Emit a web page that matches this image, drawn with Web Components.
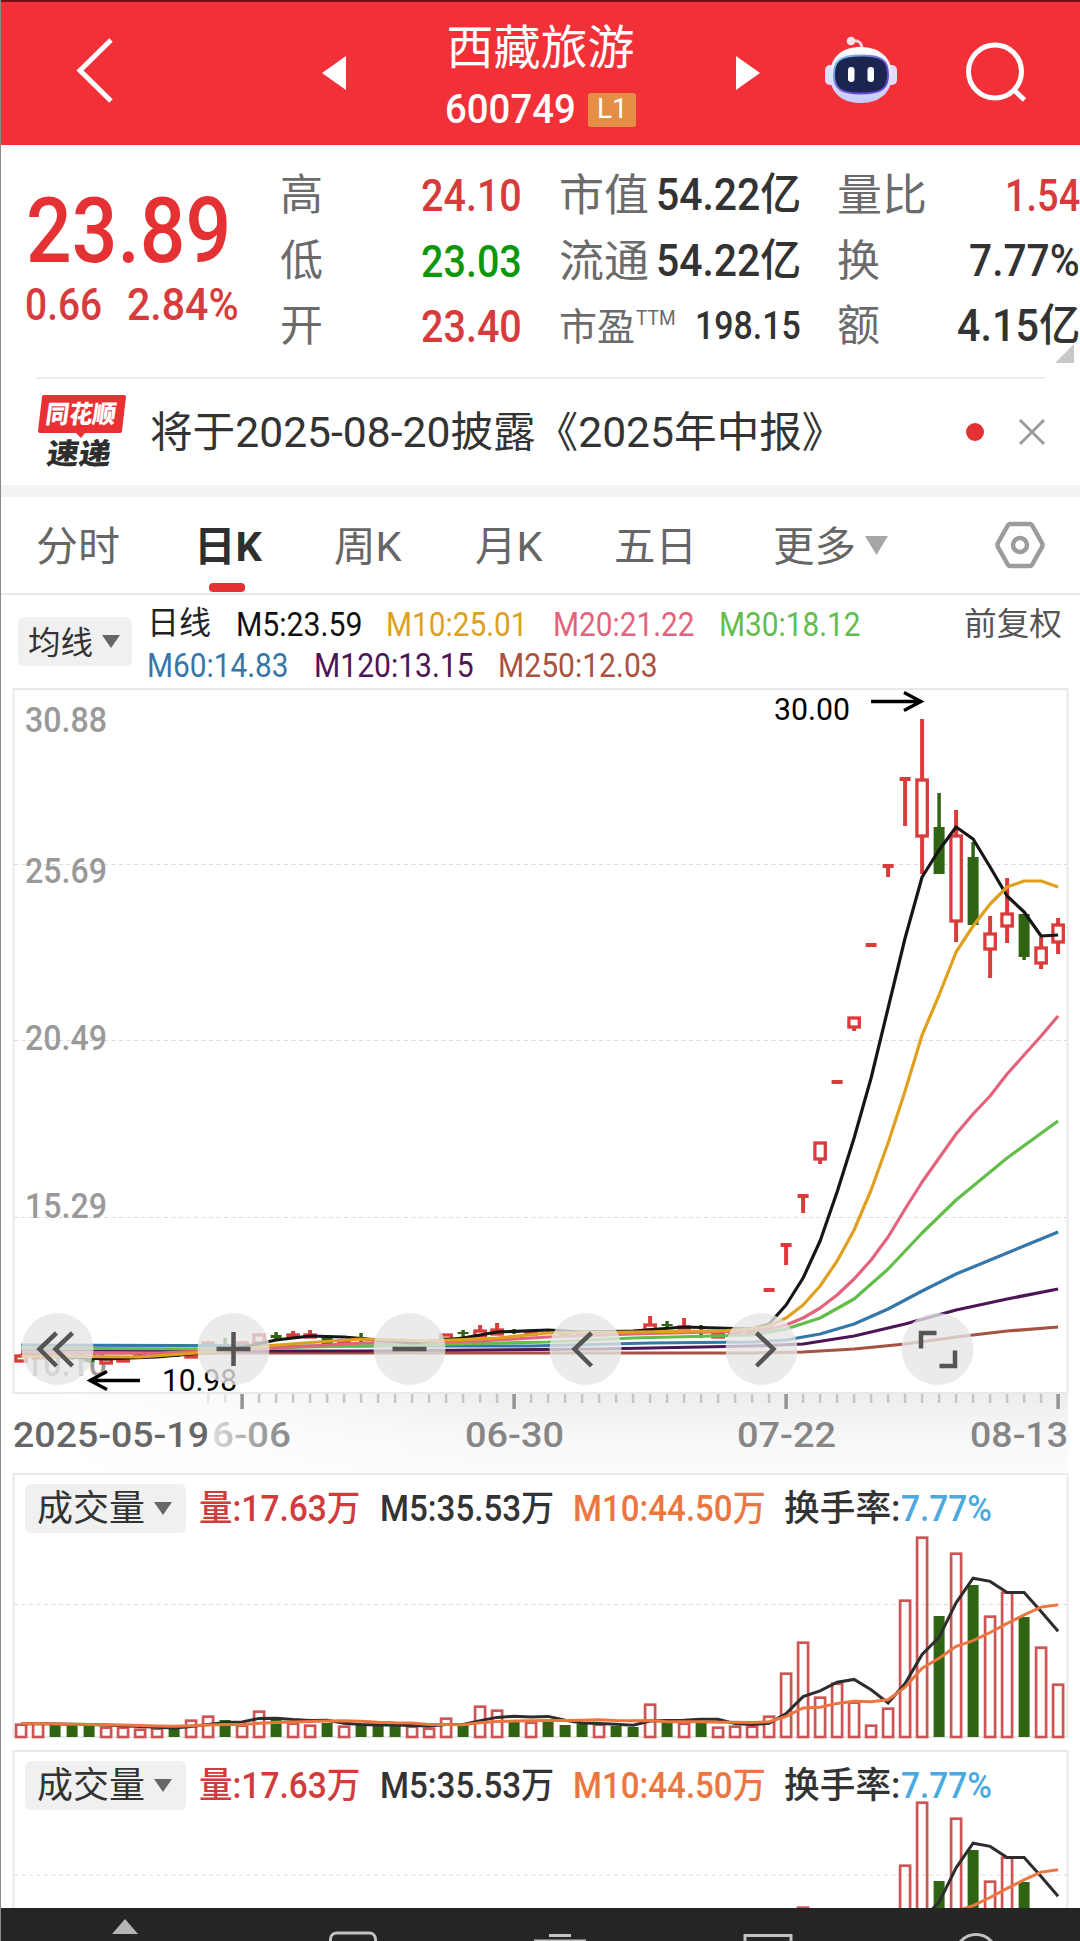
<!DOCTYPE html>
<html lang="zh-CN">
<head>
<meta charset="utf-8">
<title>西藏旅游 600749</title>
<style>
  body {
    margin: 0;
    background: #fff;
    color: #333;
    font-family: Roboto, "Noto Sans CJK SC", sans-serif;
    line-height: 1;
  }
</style>
</head>
<body>
<stock-app></stock-app>
<script>
const RED = '#da3c3c';
const GREEN = '#2f6413';
const STEP = 17;
const FIRST_X = 20.6;
const xAt = i => FIRST_X + i * STEP;

// one line of text condensed or stretched to the width in "w"
class FitText extends HTMLElement {
  constructor() {
    super();
    this.attachShadow({ mode: 'open' });
    this.shadowRoot.innerHTML = `
      <style>
        :host { display: inline-block; flex: none; white-space: nowrap; line-height: 1; }
        span { display: inline-block; transform-origin: 0 50%; }
      </style>
      <span><slot></slot></span>
    `;
  }

  connectedCallback() {
    const w = Number(this.getAttribute('w'));
    if (this.hasAttribute('size')) this.style.fontSize = this.getAttribute('size') + 'px';
    const span = this.shadowRoot.querySelector('span');
    const natural = span.offsetWidth;
    this.style.width = w + 'px';
    span.style.transform = `scaleX(${w / natural})`;
  }
}

class StockHeader extends HTMLElement {
  constructor() {
    super();
    this.attachShadow({ mode: 'open' });
    this.shadowRoot.innerHTML = `
      <style>
        :host {
          display: grid;
          grid-template-columns: 322px 438px 65px 72px 1fr;
          height: 145px;
          box-sizing: border-box;
          border-top: 2px solid #7a0d12;
          background: #f23038;
          color: #fff;
        }
        svg { display: block; }
        .back { padding: 35px 0 0 73px; }
        .switch { display: flex; justify-content: space-between; }
        .switch svg { margin-top: 54px; }
        .name { display: flex; flex-direction: column; align-items: center; padding-top: 22px; margin-right: 1px; }
        .code { display: flex; align-items: center; gap: 12px; margin-top: 18px; font-weight: 500; }
        .level {
          display: flex;
          justify-content: center;
          align-items: center;
          width: 48px;
          height: 34px;
          border-radius: 3px;
          background: #e58e46;
          font-weight: 400;
        }
        .bot { grid-column: 4; padding-top: 34px; }
        .search { padding: 40px 0 0 67px; }
      </style>
      <div class="back">
        <svg width="44" height="70" viewBox="0 0 44 70" fill="none" stroke="#fff" stroke-width="5"><path d="M38 3 7 33.5 38 64"/></svg>
      </div>
      <div class="switch">
        <svg width="24" height="34" viewBox="0 0 24 34" fill="#fff"><path d="M24 0v34L0 17z"/></svg>
        <div class="name">
          <fit-text w="188" size="47">西藏旅游</fit-text>
          <div class="code"><fit-text w="131" size="41">600749</fit-text><span class="level"><fit-text w="31" size="27">L1</fit-text></span></div>
        </div>
        <svg width="24" height="34" viewBox="0 0 24 34" fill="#fff"><path d="M0 0v34l24-17z"/></svg>
      </div>
      <div class="bot">
        <svg width="72" height="70" viewBox="0 0 72 70">
          <defs>
            <linearGradient id="shell" x1="0" y1="0" x2="0" y2="1"><stop offset="0" stop-color="#fff"/><stop offset="1" stop-color="#c6c8fb"/></linearGradient>
            <linearGradient id="rim" x1="0" y1="0" x2="1" y2="1"><stop offset="0" stop-color="#7fd7ef"/><stop offset=".6" stop-color="#6a48d8"/><stop offset="1" stop-color="#5b49e0"/></linearGradient>
          </defs>
          <path d="M27 5q10-2 10 9" fill="none" stroke="#fbd3df" stroke-width="3"/>
          <circle cx="26" cy="5" r="4.3" fill="#ffe0e6"/>
          <rect x="0" y="29" width="12" height="20" rx="5" fill="#e3dcfb"/>
          <rect x="60" y="29" width="12" height="20" rx="5" fill="#e3dcfb"/>
          <path d="M36 11c19 0 31 11 31 28S55 67 36 67 5 57 5 39s12-28 31-28z" fill="url(#shell)"/>
          <path d="M36 19.500c21 0 27 5 27 19s-6 19-27 19-27-5-27-19 6-19 27-19z" fill="#1b2550" stroke="url(#rim)" stroke-width="2"/>
          <rect x="23" y="31" width="6.5" height="15" rx="3.2" fill="#fff"/>
          <rect x="42.500" y="31" width="6.500" height="15" rx="3.200" fill="#fff"/>
        </svg>
      </div>
      <div class="search">
        <svg width="64" height="64" viewBox="0 0 64 64" fill="none" stroke="#fff" stroke-width="5"><circle cx="31" cy="29.500" r="26.500"/><path d="m49 47 11.500 11"/></svg>
      </div>
    `;
  }
}

class QuotePanel extends HTMLElement {
  constructor() {
    super();
    this.attachShadow({ mode: 'open' });
    this.shadowRoot.innerHTML = `
      <style>
        :host { display: grid; grid-template-columns: 252px 242px 250px 1fr; column-gap: 28px; height: 232px; position: relative; }
        .price { padding: 41px 0 0 26px; color: #e43133; font-weight: 500; }
        .change { display: flex; gap: 25px; margin-top: 6px; margin-left: -1px; color: #d63c3c; }
        .col { display: grid; grid-template-rows: repeat(3, 66px); padding-top: 17px; font-weight: 500; }
        .row { display: flex; justify-content: space-between; align-items: center; }
        .label { color: #6b6b6b; font-weight: 400; margin-top: 1px; }
        .ttm { align-self: flex-start; margin: 14px auto 0 1px; }
        .up { color: #d63c3c; }
        .down { color: #0c970c; }
        .row:last-child > * { margin-bottom: 2px; }
        .corner { position: absolute; right: 6px; bottom: 14px; }
      </style>
      <div class="price">
        <fit-text w="205" size="91">23.89</fit-text>
        <div class="change"><fit-text w="77" size="44">0.66</fit-text><fit-text w="112" size="44">2.84%</fit-text></div>
      </div>
      <div class="col">
        <div class="row"><fit-text class="label" w="43" size="43">高</fit-text><fit-text class="up" w="101" size="45">24.10</fit-text></div>
        <div class="row"><fit-text class="label" w="43" size="43">低</fit-text><fit-text class="down" w="101" size="45">23.03</fit-text></div>
        <div class="row"><fit-text class="label" w="43" size="43">开</fit-text><fit-text class="up" w="101" size="45">23.40</fit-text></div>
      </div>
      <div class="col" style="margin-left: 9px; margin-right: -1px">
        <div class="row"><fit-text class="label" w="90" size="44">市值</fit-text><fit-text w="145" size="44">54.22亿</fit-text></div>
        <div class="row"><fit-text class="label" w="90" size="44">流通</fit-text><fit-text w="145" size="44">54.22亿</fit-text></div>
        <div class="row"><fit-text class="label" w="76" size="38">市盈</fit-text><fit-text class="label ttm" w="40" size="21">TTM</fit-text><fit-text w="106" size="39">198.15</fit-text></div>
      </div>
      <div class="col" style="margin-left: 9px">
        <div class="row"><fit-text class="label" w="90" size="44">量比</fit-text><fit-text class="up" w="75" size="45">1.54</fit-text></div>
        <div class="row"><fit-text class="label" w="43" size="43">换</fit-text><fit-text w="111" size="44">7.77%</fit-text></div>
        <div class="row"><fit-text class="label" w="43" size="43">额</fit-text><fit-text w="123" size="44">4.15亿</fit-text></div>
      </div>
      <svg class="corner" width="19" height="19"><path d="M19 0v19H0z" fill="#c8c8c8"/></svg>
    `;
  }
}

class NoticeBar extends HTMLElement {
  constructor() {
    super();
    this.attachShadow({ mode: 'open' });
    this.shadowRoot.innerHTML = `
      <style>
        :host { display: block; height: 120px; box-sizing: border-box; border-bottom: 12px solid #f3f3f3; padding: 0 35px 0 36px; }
        .line { display: flex; align-items: center; height: 106px; border-top: 2px solid #ececec; }
        .logo { display: grid; width: 91px; height: 76px; font-weight: 900; }
        .logo > * { grid-area: 1 / 1; }
        .logo fit-text { transform: skewX(-8deg); align-self: start; }
        .brand { margin: 8px 0 0 10px; color: #fff; }
        .kind { margin: 46px 0 0 11px; color: #2e2e2e; }
        .text { margin: 2px 0 0 23px; }
        .dot { width: 18px; height: 18px; border-radius: 50%; background: #e43133; margin: 0 35px 0 auto; }
      </style>
      <div class="line">
        <div class="logo">
          <svg width="91" height="76" viewBox="36 393 91 76">
            <path d="M44 394h80q2 0 2 2l-4 34q0 2-3 2H85l-4 5-5-5H40q-2 0-2-2l4-34q0-2 2-2z" fill="#e93134"/>
          </svg>
          <fit-text class="brand" w="70" size="25">同花顺</fit-text>
          <fit-text class="kind" w="64" size="29">速递</fit-text>
        </div>
        <fit-text class="text" w="694" size="42">将于2025-08-20披露《2025年中报》</fit-text>
        <i class="dot"></i>
        <svg width="26" height="26" viewBox="0 0 26 26" stroke="#999" stroke-width="2.800"><path d="m1 1 24 24M25 1 1 25"/></svg>
      </div>
    `;
  }
}

class PeriodTabs extends HTMLElement {
  constructor() {
    super();
    this.attachShadow({ mode: 'open' });
    this.shadowRoot.innerHTML = `
      <style>
        :host { display: flex; height: 98px; box-sizing: border-box; border-bottom: 2px solid #e8e8e8; padding: 0 35px 0 36px; color: #666; }
        div { display: flex; flex-direction: column; align-items: center; justify-content: center; position: relative; padding-top: 4px; }
        .active { color: #2f2f2f; font-weight: 700; }
        .active::after { content: ""; position: absolute; bottom: 1px; left: 15px; width: 36px; height: 9px; border-radius: 4px; background: #e43133; }
        .caret { margin: 38px auto 0 9px; }
        .set { margin-top: 24px; }
      </style>
      <div><fit-text w="84" size="41">分时</fit-text></div>
      <div class="active" style="margin-left: 74px"><fit-text w="68" size="41">日K</fit-text></div>
      <div style="margin-left: 72px"><fit-text w="68" size="41">周K</fit-text></div>
      <div style="margin-left: 73px"><fit-text w="68" size="41">月K</fit-text></div>
      <div style="margin-left: 71px"><fit-text w="83" size="41">五日</fit-text></div>
      <div style="margin-left: 76px"><fit-text w="83" size="41">更多</fit-text></div>
      <svg class="caret" width="23" height="20"><path d="M0 1h23L11.500 20z" fill="#a6a6a6"/></svg>
      <svg class="set" width="50" height="48" viewBox="0 0 50 48" fill="none" stroke="#9c9c9c" stroke-width="4.500"><path d="M15.500 3h19q2 0 3 2L47 22q1 2 0 4l-9.500 17q-1 2-3 2h-19q-2 0-3-2L3 26q-1-2 0-4l9.500-17q1-2 3-2z"/><circle cx="25" cy="24" r="7"/></svg>
    `;
  }
}

// grey dropdown button with a small caret, the text comes through the slot
class PickButton extends HTMLElement {
  constructor() {
    super();
    this.attachShadow({ mode: 'open' });
    this.shadowRoot.innerHTML = `
      <style>
        :host { display: inline-flex; flex: none; align-items: center; gap: 9px; height: 49px; padding: 0 14px 0 12px; box-sizing: border-box; border-radius: 6px; background: #f0f0f0; color: #333; }
        ::slotted(*) { margin-top: 2px; }
      </style>
      <slot></slot>
      <svg width="18" height="13"><path d="M0 0h18L9 13z" fill="#666"/></svg>
    `;
  }
}

class AverageLegend extends HTMLElement {
  constructor() {
    super();
    this.attachShadow({ mode: 'open' });
    this.shadowRoot.innerHTML = `
      <style>
        :host { display: flex; height: 92px; padding: 0 18px; }
        pick-button { margin-top: 22px; padding: 0 12px 0 10px; }
        .lines { margin: 12px auto 0 15px; }
        .lines div { display: flex; height: 41px; gap: 24.500px; align-items: flex-start; }
        .adjust { margin-top: 13px; }
      </style>
      <pick-button><fit-text w="65" size="32">均线</fit-text></pick-button>
      <div class="lines">
        <div>
          <fit-text w="64" size="32" style="color:#222">日线</fit-text>
          <fit-text w="126" size="34" style="color:#111">M5:23.59</fit-text>
          <fit-text w="142" size="34" style="color:#dda023">M10:25.01</fit-text>
          <fit-text w="142" size="34" style="color:#e3637c">M20:21.22</fit-text>
          <fit-text w="142" size="34" style="color:#62bd4b">M30:18.12</fit-text>
        </div>
        <div>
          <fit-text w="142" size="34" style="color:#3577a8">M60:14.83</fit-text>
          <fit-text w="160" size="34" style="color:#4c1656">M120:13.15</fit-text>
          <fit-text w="160" size="34" style="color:#ab523f">M250:12.03</fit-text>
        </div>
      </div>
      <fit-text class="adjust" w="98" size="32" style="color:#555">前复权</fit-text>
    `;
  }
}

class PriceChart extends HTMLElement {
  constructor() {
    super();
    this.attachShadow({ mode: 'open' });
    // index, top of wick, top of body, bottom of body, bottom of wick, green
    this.candles = [
      [0, 1355, 1357, 1362, 1362], [1, 1354, 1356, 1359, 1359], [2, 1352, 1355, 1357, 1359, 1], [3, 1356, 1357, 1359, 1361, 1], [4, 1357, 1360, 1363, 1364, 1],
      [5, 1358, 1360, 1364, 1365], [6, 1358, 1360, 1362, 1362], [7, 1355, 1357, 1358, 1358], [8, 1354, 1355, 1357, 1357], [9, 1354, 1356, 1358, 1358, 1],
      [10, 1354, 1356, 1358, 1358], [11, 1342, 1344, 1350, 1350], [12, 1339, 1345, 1347, 1350, 1], [13, 1342, 1344, 1348, 1348], [14, 1334, 1336, 1344, 1344],
      [15, 1333, 1336, 1339, 1341, 1], [16, 1332, 1336, 1338, 1338], [17, 1331, 1336, 1338, 1339], [18, 1336, 1337, 1345, 1345, 1], [19, 1341, 1342, 1345, 1345],
      [20, 1334, 1338, 1340, 1343, 1], [21, 1340, 1343, 1345, 1345, 1], [22, 1341, 1342, 1345, 1345, 1], [23, 1341, 1344, 1345, 1345], [24, 1341, 1343, 1344, 1344],
      [25, 1335, 1336, 1340, 1340], [26, 1331, 1333, 1335, 1338, 1], [27, 1326, 1332, 1337, 1337], [28, 1324, 1331, 1335, 1335], [29, 1330, 1332, 1334, 1335, 1],
      [30, 1332, 1333, 1335, 1336], [31, 1330, 1333, 1335, 1335, 1], [32, 1331, 1333, 1336, 1337, 1], [33, 1332, 1334, 1336, 1337, 1], [34, 1332, 1333, 1336, 1336],
      [35, 1332, 1333, 1336, 1337, 1], [36, 1332, 1334, 1335, 1336, 1], [37, 1317, 1326, 1331, 1331], [38, 1322, 1325, 1327, 1330, 1], [39, 1319, 1328, 1329, 1329],
      [40, 1326, 1331, 1333, 1339, 1], [41, 1332, 1335, 1338, 1338], [42, 1331, 1333, 1335, 1335], [43, 1331, 1333, 1335, 1335],
      [44, 1291, 1291, 1291, 1291], [45, 1246, 1246, 1246, 1266], [46, 1197, 1197, 1197, 1214], [47, 1144, 1144, 1160, 1165], [48, 1083, 1083, 1083, 1083],
      [49, 1019, 1019, 1028, 1032], [50, 946, 946, 946, 946], [51, 867, 867, 867, 878], [52, 780, 780, 780, 827], [53, 720, 781, 837, 875],
      [54, 794, 828, 875, 875, 1], [55, 811, 837, 922, 943], [56, 843, 858, 926, 926, 1], [57, 917, 935, 950, 979], [58, 879, 915, 927, 944],
      [59, 915, 915, 958, 961, 1], [60, 938, 949, 964, 970], [61, 919, 926, 943, 955]
    ];
    // [index, y] pairs of every moving average
    this.averages = [
      ['#a65244', [[0, 1354], [39, 1354], [43, 1354], [46, 1353], [49, 1350], [52, 1345], [55, 1338], [58, 1332], [61, 1328]]],
      ['#4c1656', [[0, 1352], [20, 1352], [34, 1350], [43, 1347], [46, 1345], [49, 1337], [52, 1325], [55, 1311], [58, 1300], [61, 1290]]],
      ['#3577a8', [[0, 1346], [15, 1347], [30, 1347], [37, 1344], [43, 1343], [45, 1341], [47, 1335], [49, 1325], [51, 1310], [53, 1292], [55, 1275], [58, 1254], [61, 1233]]],
      ['#62bd4b', [[0, 1349], [10, 1350], [20, 1347], [31, 1343], [36, 1339], [43, 1336], [45, 1330], [47, 1319], [49, 1300], [51, 1270], [53, 1234], [55, 1201], [58, 1159], [61, 1122]]],
      ['#e3637c', [[0, 1353], [8, 1354], [14, 1350], [20, 1344], [27, 1342], [31, 1338], [36, 1335], [43, 1332], [44, 1330], [45, 1326], [46, 1319], [47, 1309], [48, 1296], [49, 1280], [50, 1261], [51, 1238], [52, 1210], [53, 1183], [54, 1159], [55, 1135], [56, 1115], [57, 1097], [58, 1075], [59, 1056], [60, 1037], [61, 1017]]],
      ['#161616', [[0, 1356], [5, 1360], [8, 1358], [12, 1352], [15, 1341], [17, 1337], [19, 1338], [21, 1341], [23, 1344], [26, 1339], [28, 1333], [31, 1331], [33, 1333], [36, 1332], [39, 1328], [41, 1329], [43, 1330], [44, 1325], [45, 1306], [46, 1279], [47, 1242], [48, 1193], [49, 1139], [50, 1079], [51, 1009], [52, 939], [53, 878], [54, 851], [55, 828], [56, 840], [57, 868], [58, 897], [59, 913], [60, 937], [61, 936]]],
      ['#e0a01f', [[0, 1357], [7, 1358], [12, 1352], [15, 1346], [20, 1340], [24, 1342], [28, 1339], [31, 1334], [36, 1333], [41, 1332], [43, 1330], [44, 1327], [45, 1319], [46, 1306], [47, 1287], [48, 1262], [49, 1231], [50, 1191], [51, 1144], [52, 1092], [53, 1036], [54, 996], [55, 953], [56, 927], [57, 905], [58, 888], [59, 882], [60, 882], [61, 888]]]
    ];
  }

  connectedCallback() {
    this.render();
  }

  candle([i, high, top, bottom, low, green]) {
    const x = xAt(i) + .5;
    if (green) {
      return `<path d="M${x} ${high}V${low}" stroke="${GREEN}" stroke-width="3.5"/><rect x="${x - 5.5}" y="${top}" width="11" height="${bottom - top}" fill="${GREEN}"/>`;
    }
    if (top === bottom) {
      return `<path d="M${x - 5.5} ${top}h11M${x} ${top}V${low}" stroke="${RED}" stroke-width="4"/>`;
    }
    return `<path d="M${x} ${high}V${top}M${x} ${bottom}V${low}" stroke="${RED}" stroke-width="4"/><rect x="${x - 5.2}" y="${top}" width="10.4" height="${bottom - top}" fill="#fff" stroke="${RED}" stroke-width="3.3"/>`;
  }

  ticks() {
    let out = '';
    for (let i = 11; i < 62; i++) {
      const major = (i - 13) % 16 === 0;
      const color = i < 13 ? '#e4e4e4' : major ? '#929292' : '#c6c6c6';
      out += `<path d="M${xAt(i) + .5} 1395v${major ? 15 : 9}" stroke="${color}" stroke-width="${major ? 3.5 : 2.5}"/>`;
    }
    return out;
  }

  label(text, x, y, w, size, fill) {
    return `<text x="${x}" y="${y}" font-size="${size}" textLength="${w}" lengthAdjust="spacingAndGlyphs" fill="${fill}">${text}</text>`;
  }

  render() {
    const icons = [
      'M-1-16-18 0-1 17M15-16-2 0 15 17',
      'M-17 0H17M0-17V17',
      'M-17 0H17',
      'M6-16-11 0 6 17',
      'M-5-16 12 0-5 17',
      'M-1-16h-15.500v15.500M17.500 1.500v15.500H2'
    ];
    this.shadowRoot.innerHTML = `
      <style>
        :host { display: block; height: 785px; }
        svg { display: block; }
      </style>
      <svg width="1080" height="785" viewBox="0 688 1080 785" fill="none" font-family="Roboto">
        <defs>
          <linearGradient id="axis" x1="0" y1="0" x2="0" y2="1"><stop offset="0" stop-color="#ededed"/><stop offset=".6" stop-color="#f8f8f8"/><stop offset="1" stop-color="#fbfbfb"/></linearGradient>
          <linearGradient id="fade"><stop offset="0" stop-color="#fff"/><stop offset=".4" stop-color="#fff" stop-opacity=".75"/><stop offset="1" stop-color="#fff" stop-opacity="0"/></linearGradient>
          <linearGradient id="date"><stop offset="0" stop-color="#ddd"/><stop offset=".45" stop-color="#aaa"/><stop offset="1" stop-color="#888"/></linearGradient>
        </defs>
        <path d="M13 1393h1055v80H13z" fill="url(#axis)"/>
        <path d="M13 1395h487v78H13z" fill="url(#fade)"/>
        <path d="M13.500 690h1054v704h-1054z" stroke="#e9e9e9" stroke-width="2"/>
        <path d="M14 865.500h1053M14 1041.500h1053M14 1218.500h1053" stroke="#dadada" stroke-dasharray="4 3.500"/>
        ${this.ticks()}
        <g font-weight="500">
          ${this.label('30.88', 25, 733, 82, 35, '#999')}
          ${this.label('25.69', 25, 884, 82, 35, '#999')}
          ${this.label('20.49', 25, 1051, 82, 35, '#999')}
          ${this.label('15.29', 25, 1219, 82, 35, '#999')}
          ${this.label('10.10', 25, 1377, 82, 35, '#999')}
          ${this.label('2025-05-19', 13, 1448, 196, 35, '#666')}
          ${this.label('6-06', 212, 1448, 79, 35, 'url(#date)')}
          ${this.label('06-30', 465, 1448, 99, 35, '#868686')}
          ${this.label('07-22', 737, 1448, 99, 35, '#868686')}
          ${this.label('08-13', 970, 1448, 98, 35, '#868686')}
        </g>
        ${this.candles.map(c => this.candle(c)).join('')}
        <g stroke-width="3.200" stroke-linejoin="round">
          ${this.averages.map(([color, pts]) => `<polyline points="${pts.map(([i, y]) => `${xAt(i) + .5},${y}`).join(' ')}" stroke="${color}"/>`).join('')}
        </g>
        ${this.label('30.00', 774, 721, 76, 31, '#000')}
        ${this.label('10.98', 162, 1392, 75, 31, '#000')}
        <path d="M871 702.500h50M904 693.500l17 9-17 9M140 1381.500H90M107 1372.500l-17 9 17 9" stroke="#000" stroke-width="3.300"/>
        ${icons.map((d, n) => `
          <g transform="translate(${57.5 + n * 176} 1350)">
            <circle r="36" fill="#e6e6e6" fill-opacity=".78"/>
            <path d="${d}" stroke="#555" stroke-width="4.500"/>
          </g>
        `).join('')}
      </svg>
    `;
  }
}

class VolumeChart extends HTMLElement {
  constructor() {
    super();
    this.attachShadow({ mode: 'open' });
    this.bars = [
      13, 14, 12, 12, 12, 10, 10, 8, 9, 8, 17, 21, 17, 12, 26, 18, 14, 12, 14, 11, 12,
      11, 12, 11, 9, 19, 12, 31, 27, 15, 15, 15, 12, 13, 13, 11, 10, 33, 16, 14, 16,
      10, 11, 11, 21, 64, 95, 40, 54, 35, 12, 29, 137, 200, 121, 184, 152, 121, 145, 120, 90, 53
    ];
    this.falling = [2, 3, 4, 9, 12, 15, 18, 20, 21, 22, 26, 29, 31, 32, 33, 35, 36, 38, 40, 54, 56, 59];
  }

  connectedCallback() {
    this.render();
  }

  average(n, base) {
    return this.bars.map((_, i) => {
      const part = this.bars.slice(Math.max(0, i - n + 1), i + 1);
      const mean = part.reduce((a, b) => a + b, 0) / part.length;
      return `${xAt(i) + .5},${(base - mean).toFixed(1)}`;
    }).join(' ');
  }

  render() {
    const base = Number(this.getAttribute('base'));
    const grid = Number(this.getAttribute('grid'));
    const bars = this.bars.map((h, i) => this.falling.includes(i)
      ? `<rect x="${xAt(i) - 5}" y="${base - h}" width="11" height="${h}" fill="${GREEN}"/>`
      : `<rect x="${xAt(i) - 4.5}" y="${base - h + .7}" width="10" height="${h - .7}" stroke="#cb5655" stroke-width="2.7"/>`
    ).join('');
    this.shadowRoot.innerHTML = `
      <style>
        :host { display: grid; overflow: hidden; }
        svg, .legend { grid-area: 1 / 1; }
        svg { display: block; }
        .legend { display: flex; align-items: center; align-self: start; height: 49px; padding: 12px 0 0 25px; font-weight: 500; color: #333; }
        pick-button { font-weight: 400; margin-right: 13px; }
        fit-text { margin-top: 1px; }
        .now { color: #d03b3b; margin-right: 20px; }
        .ten { color: #ec763f; margin: 1px 18px 0 19px; }
        .rate { color: #4aa9de; }
      </style>
      <svg width="1080" height="277" fill="none">
        <path d="M13.500 265V2h1054v263z" stroke="#e9e9e9" stroke-width="2"/>
        <path d="M14 ${grid}h1053" stroke="#dadada" stroke-dasharray="4 3.500"/>
        ${bars}
        <polyline points="${this.average(5, base)}" stroke="#2d2d2d" stroke-width="3"/>
        <polyline points="${this.average(10, base)}" stroke="#ec763f" stroke-width="3"/>
      </svg>
      <div class="legend">
        <pick-button><fit-text w="108" size="36">成交量</fit-text></pick-button>
        <fit-text class="now" w="161" size="36">量:17.63万</fit-text>
        <fit-text w="174" size="36">M5:35.53万</fit-text>
        <fit-text class="ten" w="193" size="36">M10:44.50万</fit-text>
        <fit-text w="117" size="36">换手率:</fit-text>
        <fit-text class="rate" w="91" size="36">7.77%</fit-text>
      </div>
    `;
  }
}

class BottomNav extends HTMLElement {
  constructor() {
    super();
    this.attachShadow({ mode: 'open' });
    this.shadowRoot.innerHTML = `
      <style>
        :host { display: block; height: 33px; background: #252525; overflow: hidden; }
        svg { display: block; }
      </style>
      <svg width="1080" height="33" fill="none" stroke="#c2c2c2" stroke-width="3">
        <path d="m125 11 13 15h-26z" fill="#b5b5b5" stroke="none"/>
        <rect x="330.500" y="25" width="45" height="40" rx="6"/>
        <path d="M549 27.500h22M534 33h52"/>
        <rect x="745" y="27.500" width="46" height="40"/>
        <circle cx="976" cy="47" r="20.500"/>
      </svg>
    `;
  }
}

class StockApp extends HTMLElement {
  constructor() {
    super();
    this.attachShadow({ mode: 'open' });
    this.shadowRoot.innerHTML = `
      <style>
        :host { display: flex; flex-direction: column; position: relative; width: 1080px; height: 1941px; overflow: hidden; }
        :host::before { content: ""; position: absolute; z-index: 1; left: 0; top: 0; width: 1px; height: 100%; background: #8a8a8a; }
      </style>
      <stock-header></stock-header>
      <quote-panel></quote-panel>
      <notice-bar></notice-bar>
      <period-tabs></period-tabs>
      <average-legend></average-legend>
      <price-chart></price-chart>
      <volume-chart base="265" grid="132.5" style="height: 277px"></volume-chart>
      <volume-chart base="253" grid="126" style="height: 159px"></volume-chart>
      <bottom-nav></bottom-nav>
    `;
  }
}

customElements.define('stock-app', StockApp);
customElements.define('stock-header', StockHeader);
customElements.define('quote-panel', QuotePanel);
customElements.define('notice-bar', NoticeBar);
customElements.define('period-tabs', PeriodTabs);
customElements.define('pick-button', PickButton);
customElements.define('average-legend', AverageLegend);
customElements.define('price-chart', PriceChart);
customElements.define('volume-chart', VolumeChart);
customElements.define('bottom-nav', BottomNav);
// last, so that the text is measured inside its finished parents
customElements.define('fit-text', FitText);
</script>
</body>
</html>
